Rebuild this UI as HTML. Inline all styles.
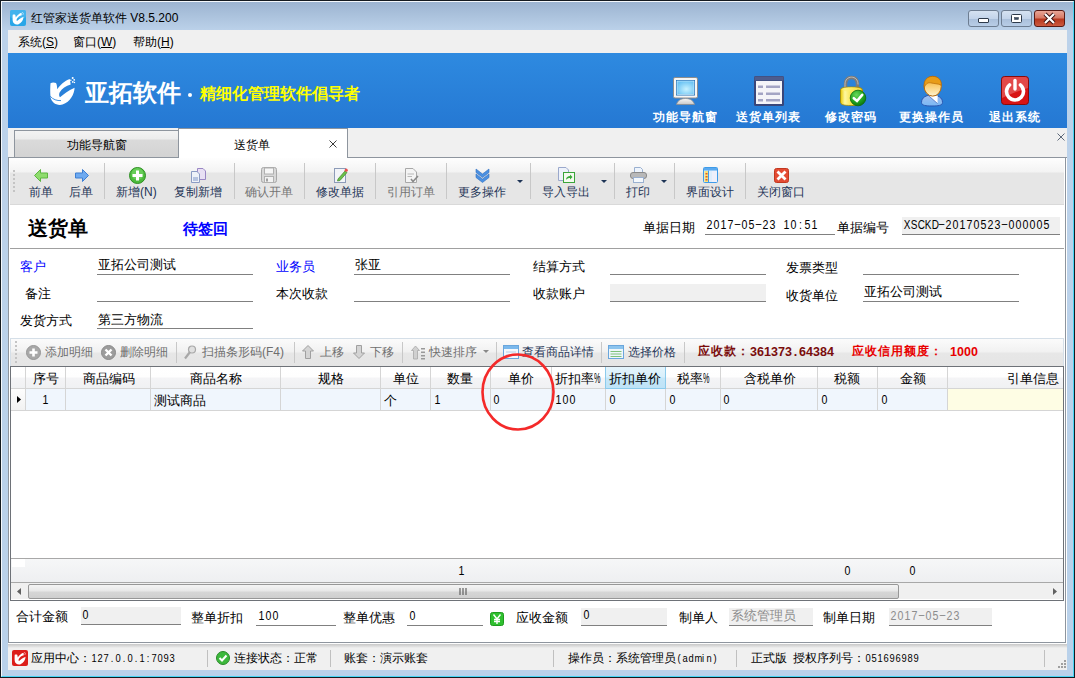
<!DOCTYPE html>
<html><head><meta charset="utf-8">
<style>
*{margin:0;padding:0;box-sizing:border-box}
html,body{width:1075px;height:678px;overflow:hidden;background:#b9d1ea}
body{position:relative;font-family:"Liberation Sans",sans-serif;font-size:12px;color:#000}
.a{position:absolute}
.t{position:absolute;white-space:nowrap;font-size:12px;line-height:12px}
.t13{position:absolute;white-space:nowrap;font-size:13px;line-height:13px}
.m{font-family:"Liberation Mono",monospace}
.d{font-family:"Liberation Sans",sans-serif;font-size:12.5px;line-height:13px}
.d i{display:inline-block;width:7px;text-align:center;font-style:normal;transform:scaleX(.85)}
.bd i{transform:none}
.d b{display:inline-block;width:7px;text-align:center;font-weight:normal;transform:scaleX(0.8)}
.d12{font-family:"Liberation Sans",sans-serif;font-size:11px}
.d12 i{display:inline-block;width:6px;text-align:center;font-style:normal;transform:scaleX(.85)}
svg{position:absolute;overflow:visible}
</style></head><body>
<!-- window frame -->
<div class="a" style="left:0;top:0;width:1075px;height:678px;border:1px solid #141a20;background:linear-gradient(#9bb3d0 0,#bcd2ea 30px,#b9d1ea 100%)"></div>
<div class="a" style="left:1px;top:1px;width:1073px;height:676px;border:1px solid #f4f8fc;border-right-color:#46d4f4;border-bottom-color:#46d4f4"></div>

<!-- title -->
<svg style="left:10px;top:10px" width="16" height="16" viewBox="0 0 16 16"><rect x="0" y="0" width="16" height="16" rx="2" fill="#28a6e8"/><rect x="0" y="0" width="16" height="8" rx="2" fill="#5cc0f2" opacity=".5"/><g transform="translate(2.5,2) scale(0.45)"><path d="M0.5,6.3 C1.8,5.3 4.2,5.2 6,6 C6.9,7.5 7.1,10 7.2,12.3 C10,8 14.5,3.6 19.8,1.9 L20.7,7.4 C16,8.6 11.8,11.5 9.6,15.5 C8.9,17 8.9,19 10,20.2 C13.5,17.5 18,13.5 24.6,10.8 C24.2,17.5 20.5,24.8 12.5,27.6 C6.5,29 1.5,25.5 0.5,20 C0.1,15 0.2,10 0.5,6.3Z" fill="#fff"/><g fill="#fff"><circle cx="22.7" cy="1" r="1"/><circle cx="24.2" cy="2.8" r="0.9"/><circle cx="22.8" cy="4.9" r="0.9"/><circle cx="20.8" cy="3.3" r="0.8"/><circle cx="24.5" cy="5.5" r="0.7"/></g></g></svg>
<div class="t" style="left:31px;top:12px;font-size:12px">红管家送货单软件 V8.5.200</div>
<!-- window buttons -->
<div class="a" style="left:968px;top:10px;width:31px;height:17px;border:1px solid #6d7d91;border-radius:3px;background:linear-gradient(#d5e2f1 0,#c3d4ea 50%,#a9bfda 51%,#b8cde6 100%)"></div>
<div class="a" style="left:978px;top:18px;width:11px;height:5px;border:1px solid #2d3a4a;background:#fff;border-radius:1px"></div>
<div class="a" style="left:1001px;top:10px;width:31px;height:17px;border:1px solid #6d7d91;border-radius:3px;background:linear-gradient(#d5e2f1 0,#c3d4ea 50%,#a9bfda 51%,#b8cde6 100%)"></div>
<svg style="left:1011px;top:14px" width="11" height="9" viewBox="0 0 11 9"><rect x="0.5" y="0.5" width="10" height="8" rx="1" fill="#fff" stroke="#2d3a4a"/><rect x="3.5" y="3.5" width="4" height="2" fill="#3a4a5e" stroke="#2d3a4a" stroke-width=".5"/></svg>
<div class="a" style="left:1034px;top:10px;width:31px;height:17px;border:1px solid #5a1a14;border-radius:3px;background:linear-gradient(#e8a596 0,#d77a66 45%,#b8381f 55%,#cc5a40 100%)"></div>
<svg style="left:1043px;top:13px" width="13" height="11" viewBox="0 0 13 11"><path d="M2 1 L11 10 M11 1 L2 10" stroke="#3a1010" stroke-width="4"/><path d="M2 1 L11 10 M11 1 L2 10" stroke="#fff" stroke-width="2.2"/></svg>

<!-- menu -->
<div class="a" style="left:8px;top:30px;width:1059px;height:23px;background:#f0f0f0"></div>
<div class="t" style="left:18px;top:36px">系统(<u>S</u>)</div>
<div class="t" style="left:73px;top:36px">窗口(<u>W</u>)</div>
<div class="t" style="left:133px;top:36px">帮助(<u>H</u>)</div>

<!-- banner -->
<div class="a" style="left:8px;top:53px;width:1059px;height:75px;background:linear-gradient(#2e8ae0,#2578d3)"></div>
<svg style="left:50px;top:77px" width="26" height="29" viewBox="0 0 26 29"><path d="M0.5,6.3 C1.8,5.3 4.2,5.2 6,6 C6.9,7.5 7.1,10 7.2,12.3 C10,8 14.5,3.6 19.8,1.9 L20.7,7.4 C16,8.6 11.8,11.5 9.6,15.5 C8.9,17 8.9,19 10,20.2 C13.5,17.5 18,13.5 24.6,10.8 C24.2,17.5 20.5,24.8 12.5,27.6 C6.5,29 1.5,25.5 0.5,20 C0.1,15 0.2,10 0.5,6.3Z" fill="#fff"/><g fill="#fff"><circle cx="22.7" cy="1" r="1"/><circle cx="24.2" cy="2.8" r="0.9"/><circle cx="22.8" cy="4.9" r="0.9"/><circle cx="20.8" cy="3.3" r="0.8"/><circle cx="24.5" cy="5.5" r="0.7"/></g><path d="M0.2,19.2 C3,22.6 7,23.8 11,23.6" stroke="#2b85dc" stroke-width="0.9" fill="none"/></svg>
<div class="t" style="left:85px;top:81px;font-size:24px;line-height:24px;color:#fff;font-weight:bold">亚拓软件</div>
<div class="a" style="left:188px;top:93px;width:4px;height:4px;border-radius:50%;background:#fff"></div>
<div class="t" style="left:200px;top:86px;font-size:16px;line-height:16px;color:#ffff00;font-weight:bold">精细化管理软件倡导者</div>

<!-- banner right icons -->
<div class="t13" style="left:653px;top:111px;color:#fff;font-weight:bold;font-size:12px;letter-spacing:1px">功能导航窗</div>
<div class="t13" style="left:736px;top:111px;color:#fff;font-weight:bold;font-size:12px;letter-spacing:1px">送货单列表</div>
<div class="t13" style="left:825px;top:111px;color:#fff;font-weight:bold;font-size:12px;letter-spacing:1px">修改密码</div>
<div class="t13" style="left:899px;top:111px;color:#fff;font-weight:bold;font-size:12px;letter-spacing:1px">更换操作员</div>
<div class="t13" style="left:989px;top:111px;color:#fff;font-weight:bold;font-size:12px;letter-spacing:1px">退出系统</div>

<!-- banner icons -->
<svg style="left:673px;top:77px" width="26" height="28" viewBox="0 0 26 28"><defs><radialGradient id="gscr" cx=".55" cy=".6" r=".6"><stop offset="0" stop-color="#c8f2ff"/><stop offset="1" stop-color="#6cc4f4"/></radialGradient><linearGradient id="gstand" x1="0" y1="0" x2="0" y2="1"><stop offset="0" stop-color="#f8f8f8"/><stop offset="1" stop-color="#c8c8c8"/></linearGradient></defs><rect x="0.5" y="0.5" width="24" height="20.5" rx="1.5" fill="#f6f6f6" stroke="#8e8e8e"/><rect x="3" y="3" width="19" height="15.5" fill="#1a6fb8"/><rect x="4" y="4" width="17" height="13.5" fill="url(#gscr)" stroke="#e0f6ff" stroke-width=".6"/><path d="M3.5,27.5 C4.5,23.5 8,21.5 12.5,21.5 C17,21.5 20.5,23.5 21.5,27.5Z" fill="url(#gstand)" stroke="#8e8e8e" stroke-width=".8"/></svg>
<svg style="left:754px;top:76px" width="30" height="30" viewBox="0 0 30 30"><rect x="0" y="0" width="30" height="30" rx="1.5" fill="#39467a"/><rect x="0.5" y="0.5" width="29" height="4" fill="#4d5c8e"/><rect x="2" y="5" width="26" height="23" fill="#f4f4f8"/><g fill="#a3a4c4"><rect x="4" y="9.5" width="5" height="2.5"/><rect x="12" y="9.5" width="14" height="2.5"/><rect x="4" y="16.5" width="5" height="2.5"/><rect x="12" y="16.5" width="14" height="2.5"/><rect x="4" y="23" width="5" height="2.5"/><rect x="12" y="23" width="14" height="2.5"/></g></svg>
<svg style="left:840px;top:76px" width="27" height="30" viewBox="0 0 27 30"><defs><linearGradient id="glock" x1="0" y1="0" x2="1" y2="0"><stop offset="0" stop-color="#e8c800"/><stop offset=".2" stop-color="#fff8a0"/><stop offset=".55" stop-color="#f8e040"/><stop offset="1" stop-color="#d8b000"/></linearGradient><radialGradient id="gchk" cx=".4" cy=".3" r=".7"><stop offset="0" stop-color="#6ad85a"/><stop offset=".6" stop-color="#22a822"/><stop offset="1" stop-color="#0e7a12"/></radialGradient></defs><path d="M5.5,13 V8.5 C5.5,3.5 8,1.5 11.5,1.5 C15,1.5 17.5,3.5 17.5,8.5 V13" fill="none" stroke="#7c7c7c" stroke-width="3.4"/><path d="M5,12 V8.5 C5,3.5 8,1.2 11.5,1.2 C15,1.2 18,3.5 18,8.5" fill="none" stroke="#b8b8b8" stroke-width="1"/><path d="M0.5,14 C0.5,12 3,11 11.5,11 C20,11 22.5,12 22.5,14 V26 C22.5,28.5 20,29.5 11.5,29.5 C3,29.5 0.5,28.5 0.5,26Z" fill="url(#glock)" stroke="#a88a00" stroke-width=".8"/><ellipse cx="11.5" cy="13.5" rx="10" ry="2.2" fill="#fff070" opacity=".6"/><circle cx="18" cy="22" r="7.8" fill="url(#gchk)" stroke="#0a6a0e" stroke-width=".8"/><path d="M13.8,22.2 L17,25 L22.2,18.8" stroke="#fff" stroke-width="2.6" fill="none" stroke-linecap="round"/></svg>
<svg style="left:921px;top:76px" width="23" height="31" viewBox="0 0 23 31"><defs><linearGradient id="gface" x1="0" y1="0" x2="0" y2="1"><stop offset="0" stop-color="#f6a818"/><stop offset="1" stop-color="#fff4d0"/></linearGradient><linearGradient id="gshirt" x1="0" y1="0" x2="0" y2="1"><stop offset="0" stop-color="#a4bff0"/><stop offset="1" stop-color="#78b8f4"/></linearGradient></defs><path d="M0.5,26.5 C0.5,21.5 5,19 11,19 C17,19 21.5,21.5 21.5,26.5 C21.5,29.5 17,30 11,30 C5,30 0.5,29.5 0.5,26.5Z" fill="url(#gshirt)" stroke="#2a56b0"/><path d="M7.5,19.6 L16.7,19.6 L16.5,27.5Z" fill="#fff"/><path d="M7.5,19.6 L16.5,27.5" stroke="#3a62b8" stroke-width=".7"/><ellipse cx="11.7" cy="10.2" rx="8.6" ry="9.9" fill="url(#gface)" stroke="#b86a08"/><path d="M3.2,11.5 C2.4,4 6,0.4 11.7,0.4 C17.5,0.4 20.7,4 20.3,9.2 C17,7.5 13,7.8 9.5,6.8 C6.5,6.3 4.5,8.5 3.2,11.5Z" fill="#e89c18" stroke="#b86a08" stroke-width=".7"/></svg>
<svg style="left:1001px;top:76px" width="28" height="29" viewBox="0 0 28 29"><rect x="0.5" y="0.5" width="27" height="28" rx="3" fill="#d81414" stroke="#8a0a0a"/><path d="M1 4 Q1 1 4 1 H24 Q27 1 27 4 V12 Q14 16 1 22Z" fill="#f08a8a" opacity=".45"/><path d="M8.5 9 A8.5 8.5 0 1 0 19.5 9" fill="none" stroke="#fff" stroke-width="3.6" stroke-linecap="round"/><path d="M14 4.5 V13" stroke="#fff" stroke-width="3.4" stroke-linecap="round"/></svg>

<!-- tab strip -->
<div class="a" style="left:8px;top:128px;width:1059px;height:29px;background:#f0f0f0"></div>
<div class="a" style="left:347px;top:157px;width:720px;height:1px;background:#8e959e"></div><div class="a" style="left:8px;top:157px;width:7px;height:1px;background:#8e959e"></div>
<div class="a" style="left:14px;top:130px;width:165px;height:28px;border:1px solid #8e959e;background:linear-gradient(#f3f3f3 0,#ececec 8px,#dadada 9px,#d3d3d3 100%)"></div>
<div class="t" style="left:67px;top:139px">功能导航窗</div>
<div class="a" style="left:178px;top:128px;width:170px;height:30px;border:1px solid #8e959e;border-bottom:none;background:#fff"></div>
<div class="t" style="left:234px;top:139px">送货单</div>
<svg style="left:329px;top:140px" width="8" height="8" viewBox="0 0 8 8"><path d="M0.5 0.5 L7.5 7.5 M7.5 0.5 L0.5 7.5" stroke="#3c3c3c" stroke-width="1"/></svg>
<svg style="left:1057px;top:133px" width="8" height="8" viewBox="0 0 8 8"><path d="M0.5 0.5 L7.5 7.5 M7.5 0.5 L0.5 7.5" stroke="#5c6878" stroke-width="1"/></svg>

<!-- panel -->
<div class="a" style="left:8px;top:158px;width:1059px;height:485px;background:#fff"></div><div class="a" style="left:8px;top:158px;width:1058px;height:485px;border:1px solid #8e959e;border-top:none;background:#fff"></div>

<!-- toolbar -->
<div class="a" style="left:10px;top:158px;width:1054px;height:47px;background:linear-gradient(#fefefe 0,#f3f3f3 14px,#e6e6e6 15px,#e6e6e6 45px);border-bottom:1px solid #d9d9d9"></div>
<svg style="left:13px;top:170px" width="2" height="24" viewBox="0 0 2 24"><g fill="#c4c4c4"><rect y="0" width="2" height="2"/><rect y="4" width="2" height="2"/><rect y="8" width="2" height="2"/><rect y="12" width="2" height="2"/><rect y="16" width="2" height="2"/><rect y="20" width="2" height="2"/></g></svg>
<div class="a" style="left:104px;top:163px;width:1px;height:36px;background:#c8c8c8"></div>
<div class="a" style="left:234px;top:163px;width:1px;height:36px;background:#c8c8c8"></div>
<div class="a" style="left:304px;top:163px;width:1px;height:36px;background:#c8c8c8"></div>
<div class="a" style="left:375px;top:163px;width:1px;height:36px;background:#c8c8c8"></div>
<div class="a" style="left:446px;top:163px;width:1px;height:36px;background:#c8c8c8"></div>
<div class="a" style="left:530px;top:163px;width:1px;height:36px;background:#c8c8c8"></div>
<div class="a" style="left:614px;top:163px;width:1px;height:36px;background:#c8c8c8"></div>
<div class="a" style="left:674px;top:163px;width:1px;height:36px;background:#c8c8c8"></div>
<div class="a" style="left:745px;top:163px;width:1px;height:36px;background:#c8c8c8"></div>
<!-- icons -->
<svg style="left:34px;top:169px" width="14" height="13" viewBox="0 0 14 13"><path d="M0.5 6.5 L6.5 0.5 L6.5 4 L13.5 4 L13.5 9 L6.5 9 L6.5 12.5Z" fill="#8fdc6e" stroke="#5cb640" stroke-width="1"/></svg>
<svg style="left:75px;top:169px" width="14" height="13" viewBox="0 0 14 13"><path d="M13.5 6.5 L7.5 0.5 L7.5 4 L0.5 4 L0.5 9 L7.5 9 L7.5 12.5Z" fill="#6eaaf0" stroke="#3d7fd3" stroke-width="1"/></svg>
<svg style="left:129px;top:167px" width="17" height="17" viewBox="0 0 17 17"><circle cx="8.5" cy="8.5" r="8" fill="#4cbb3c" stroke="#2f8f25"/><circle cx="8.5" cy="7" r="6" fill="#7ad96a" opacity=".6"/><path d="M8.5 3.5 V13.5 M3.5 8.5 H13.5" stroke="#fff" stroke-width="3"/></svg>
<svg style="left:191px;top:168px" width="15" height="15" viewBox="0 0 15 15"><path d="M6.5 0.5 H12 L14.5 3 V11.5 H6.5Z" fill="#e8e0f4" stroke="#9a87c4"/><path d="M0.5 3.5 H6 L8.5 6 V14.5 H0.5Z" fill="#eef2f8" stroke="#8b9cc4"/><rect x="2" y="9" width="5" height="4" fill="#b6c4e0"/></svg>
<svg style="left:261px;top:167px" width="16" height="16" viewBox="0 0 16 16"><rect x="0.5" y="0.5" width="15" height="15" rx="2" fill="#d8d8d8" stroke="#a8a8a8"/><rect x="3.5" y="1" width="9" height="6" fill="#f6f6f6" stroke="#b0b0b0"/><rect x="3.5" y="9.5" width="9" height="6" fill="#f2f2f2" stroke="#b0b0b0"/><rect x="5" y="11.5" width="2" height="3" fill="#a0a0a0"/></svg>
<svg style="left:334px;top:167px" width="14" height="16" viewBox="0 0 14 16"><rect x="0.5" y="1.5" width="11" height="14" fill="#f2f4f8" stroke="#8d9bb8"/><path d="M4 12 L11 4 L13 5.5 L6 13.5 L3.5 14Z" fill="#6cc04a" stroke="#3f8a2a" stroke-width=".7"/><circle cx="12.2" cy="3.2" r="1.6" fill="#e85050"/></svg>
<svg style="left:405px;top:168px" width="14" height="15" viewBox="0 0 14 15"><path d="M0.5 0.5 H8 L11.5 4 V14.5 H0.5Z" fill="#f4f4f4" stroke="#a8a8a8"/><path d="M2.5 6 H9 M2.5 8.5 H7" stroke="#b8b8b8"/><path d="M6 11 L8 13.5 L13 8" stroke="#8a8a8a" stroke-width="1.6" fill="none"/></svg>
<svg style="left:475px;top:168px" width="15" height="15" viewBox="0 0 15 15"><path d="M1 1 L7.5 6 L14 1 L14 4.5 L7.5 9.5 L1 4.5Z" fill="#4a90e2" stroke="#2f6fc0" stroke-width=".6"/><path d="M1 6 L7.5 11 L14 6 L14 9.5 L7.5 14.5 L1 9.5Z" fill="#4a90e2" stroke="#2f6fc0" stroke-width=".6"/></svg>
<svg style="left:558px;top:167px" width="17" height="16" viewBox="0 0 17 16"><path d="M0.5 0.5 H8 L10.5 3 V13.5 H0.5Z" fill="#eef2fa" stroke="#9aa8cc"/><rect x="5.5" y="5.5" width="11" height="10" fill="#f4fbf0" stroke="#3aa53a"/><path d="M8 13 C8 10 10 9 12 9 L12 7.5 L14.5 10 L12 12.5 L12 11 C10.5 11 9 11.5 8 13Z" fill="#38a838"/></svg>
<svg style="left:630px;top:167px" width="17" height="16" viewBox="0 0 17 16"><path d="M4.5 0.5 H10.5 L12.5 2.5 V6.5 H4.5Z" fill="#eef4fc" stroke="#9ab0d0"/><rect x="0.5" y="5.5" width="16" height="6" rx="2.5" fill="#b8b8b8" stroke="#8a8a8a"/><rect x="3.5" y="10.5" width="10" height="5" fill="#f4f8fc" stroke="#9ab0d0"/></svg>
<svg style="left:703px;top:167px" width="15" height="16" viewBox="0 0 15 16"><rect x="0.5" y="0.5" width="14" height="15" rx="1" fill="#dfeefc" stroke="#3e9be8"/><rect x="1" y="1" width="13" height="2.5" fill="#5aaaf0"/><rect x="1.5" y="4" width="4" height="11" fill="#f6e27a"/><path d="M5.5 3.5 V15" stroke="#3e9be8"/><rect x="9" y="4" width="5" height="11" fill="#eef0fb"/><g fill="#e05a2a"><rect x="2.5" y="6" width="2" height="1.5"/><rect x="2.5" y="9" width="2" height="1.5"/><rect x="2.5" y="12" width="2" height="1.5"/></g></svg>
<svg style="left:774px;top:168px" width="15" height="15" viewBox="0 0 15 15"><rect x="0.5" y="0.5" width="14" height="14" rx="2" fill="#e44b33" stroke="#c2381f"/><path d="M3.5 3.5 L11.5 11.5 M11.5 3.5 L3.5 11.5" stroke="#fff" stroke-width="2.8"/></svg>
<!-- dropdown arrows -->
<svg style="left:517px;top:180px" width="6" height="3" viewBox="0 0 6 3"><path d="M0 0 H6 L3 3Z" fill="#1e3456"/></svg>
<svg style="left:601px;top:180px" width="6" height="3" viewBox="0 0 6 3"><path d="M0 0 H6 L3 3Z" fill="#1e3456"/></svg>
<svg style="left:661px;top:180px" width="6" height="3" viewBox="0 0 6 3"><path d="M0 0 H6 L3 3Z" fill="#1e3456"/></svg>
<!-- toolbar labels -->
<div class="t" style="left:29px;top:186px;color:#1e3456">前单</div>
<div class="t" style="left:69px;top:186px;color:#1e3456">后单</div>
<div class="t" style="left:116px;top:186px;color:#1e3456">新增(N)</div>
<div class="t" style="left:174px;top:186px;color:#1e3456">复制新增</div>
<div class="t" style="left:245px;top:186px;color:#747474">确认开单</div>
<div class="t" style="left:316px;top:186px;color:#1e3456">修改单据</div>
<div class="t" style="left:387px;top:186px;color:#747474">引用订单</div>
<div class="t" style="left:458px;top:186px;color:#1e3456">更多操作</div>
<div class="t" style="left:542px;top:186px;color:#1e3456">导入导出</div>
<div class="t" style="left:626px;top:186px;color:#1e3456">打印</div>
<div class="t" style="left:686px;top:186px;color:#1e3456">界面设计</div>
<div class="t" style="left:757px;top:186px;color:#1e3456">关闭窗口</div>

<!-- header -->
<div class="t" style="left:28px;top:218px;font-size:20px;line-height:20px;font-weight:bold;font-family:'Liberation Serif',serif">送货单</div>
<div class="t" style="left:183px;top:221px;font-size:15px;line-height:15px;font-weight:bold;color:#0000ff">待签回</div>
<div class="t13" style="left:643px;top:221px">单据日期</div>
<div class="t d" style="left:706px;top:219px"><i>2</i><i>0</i><i>1</i><i>7</i><i style="transform:translateY(-1px) scaleX(.8)">&#8211;</i><i>0</i><i>5</i><i style="transform:translateY(-1px) scaleX(.8)">&#8211;</i><i>2</i><i>3</i><i>&nbsp;</i><i>1</i><i>0</i><i>:</i><i>5</i><i>1</i></div>
<div class="a" style="left:705px;top:234px;width:130px;height:1px;background:#808080"></div>
<div class="t13" style="left:837px;top:221px">单据编号</div>
<div class="a" style="left:902px;top:217px;width:158px;height:18px;background:#f0f0f0;border-bottom:1px solid #808080"></div>
<div class="t d" style="left:903px;top:219px"><b>X</b><b>S</b><b>C</b><b>K</b><b>D</b><i style="transform:translateY(-1px) scaleX(.8)">&#8211;</i><i>2</i><i>0</i><i>1</i><i>7</i><i>0</i><i>5</i><i>2</i><i>3</i><i style="transform:translateY(-1px) scaleX(.8)">&#8211;</i><i>0</i><i>0</i><i>0</i><i>0</i><i>0</i><i>5</i></div>
<div class="a" style="left:10px;top:248px;width:1054px;height:1px;background:#a0a0a0"></div>

<!-- form -->
<div class="t13" style="left:20px;top:260px;color:#0000ff">客户</div>
<div class="t13" style="left:98px;top:258px">亚拓公司测试</div>
<div class="a" style="left:97px;top:274px;width:156px;height:1px;background:#808080"></div>
<div class="t13" style="left:276px;top:260px;color:#0000ff">业务员</div>
<div class="t13" style="left:355px;top:258px">张亚</div>
<div class="a" style="left:354px;top:274px;width:156px;height:1px;background:#808080"></div>
<div class="t13" style="left:533px;top:260px">结算方式</div>
<div class="a" style="left:610px;top:274px;width:156px;height:1px;background:#808080"></div>
<div class="t13" style="left:786px;top:261px">发票类型</div>
<div class="a" style="left:863px;top:274px;width:156px;height:1px;background:#808080"></div>

<div class="t13" style="left:25px;top:287px">备注</div>
<div class="a" style="left:97px;top:301px;width:156px;height:1px;background:#808080"></div>
<div class="t13" style="left:276px;top:287px">本次收款</div>
<div class="a" style="left:354px;top:301px;width:156px;height:1px;background:#808080"></div>
<div class="t13" style="left:533px;top:287px">收款账户</div>
<div class="a" style="left:610px;top:284px;width:156px;height:18px;background:#f0f0f0;border-bottom:1px solid #808080"></div>
<div class="t13" style="left:786px;top:289px">收货单位</div>
<div class="t13" style="left:864px;top:285px">亚拓公司测试</div>
<div class="a" style="left:863px;top:301px;width:156px;height:1px;background:#808080"></div>

<div class="t13" style="left:20px;top:314px">发货方式</div>
<div class="t13" style="left:98px;top:313px">第三方物流</div>
<div class="a" style="left:97px;top:328px;width:156px;height:1px;background:#808080"></div>

<!-- detail toolbar -->
<div class="a" style="left:10px;top:338px;width:1054px;height:28px;border:1px solid #d5dfe8;border-bottom:none;background:linear-gradient(#fbfbfb 0,#f1f1f1 13px,#e7e7e7 14px,#e5e5e5 100%)"></div>
<svg style="left:15px;top:341px" width="2" height="22" viewBox="0 0 2 22"><g fill="#c4c4c4"><rect y="0" width="2" height="2"/><rect y="4" width="2" height="2"/><rect y="8" width="2" height="2"/><rect y="12" width="2" height="2"/><rect y="16" width="2" height="2"/><rect y="20" width="2" height="2"/></g></svg>
<div class="a" style="left:176px;top:342px;width:1px;height:21px;background:#c8c8c8"></div>
<div class="a" style="left:294px;top:342px;width:1px;height:21px;background:#c8c8c8"></div>
<div class="a" style="left:402px;top:342px;width:1px;height:21px;background:#c8c8c8"></div>
<div class="a" style="left:496px;top:342px;width:1px;height:21px;background:#c8c8c8"></div>
<div class="a" style="left:601px;top:342px;width:1px;height:21px;background:#c8c8c8"></div>
<div class="a" style="left:684px;top:342px;width:1px;height:21px;background:#c8c8c8"></div>
<svg style="left:26px;top:345px" width="15" height="15" viewBox="0 0 15 15"><circle cx="7.5" cy="7.5" r="7" fill="#a8a8a8" stroke="#969696"/><path d="M7.5 3.5 V11.5 M3.5 7.5 H11.5" stroke="#fff" stroke-width="2.6"/></svg>
<svg style="left:101px;top:345px" width="15" height="15" viewBox="0 0 15 15"><circle cx="7.5" cy="7.5" r="7" fill="#9c9c9c" stroke="#8a8a8a"/><path d="M4.5 4.5 L10.5 10.5 M10.5 4.5 L4.5 10.5" stroke="#fff" stroke-width="2.4"/></svg>
<svg style="left:184px;top:345px" width="12" height="15" viewBox="0 0 12 15"><circle cx="8" cy="4.5" r="3.5" fill="#e0e0e0" stroke="#a8a8a8" stroke-width="1.2"/><path d="M6 7 L1 13.5" stroke="#a8a8a8" stroke-width="2.2"/></svg>
<svg style="left:302px;top:345px" width="12" height="14" viewBox="0 0 12 14"><path d="M6 0.5 L11.5 6 H8.5 V13.5 H3.5 V6 H0.5Z" fill="#d4d4d4" stroke="#a0a0a0"/></svg>
<svg style="left:353px;top:345px" width="12" height="14" viewBox="0 0 12 14"><path d="M6 13.5 L11.5 8 H8.5 V0.5 H3.5 V8 H0.5Z" fill="#d4d4d4" stroke="#a0a0a0"/></svg>
<svg style="left:411px;top:345px" width="15" height="15" viewBox="0 0 15 15"><path d="M4.5 1 L8.5 5.5 H6.5 V14 H2.5 V5.5 H0.5Z" fill="#d0d0d0" stroke="#a8a8a8" stroke-width=".8"/><g fill="#999"><rect x="10" y="3" width="4" height="1.5"/><rect x="10" y="6.5" width="4" height="1.5"/><rect x="10" y="10" width="4" height="1.5"/><rect x="10" y="13" width="4" height="1.5"/></g></svg>
<svg style="left:483px;top:350px" width="6" height="3" viewBox="0 0 6 3"><path d="M0 0 H6 L3 3Z" fill="#888"/></svg>
<svg style="left:503px;top:345px" width="16" height="14" viewBox="0 0 16 14"><rect x="0.5" y="0.5" width="15" height="13" fill="#f4f8fc" stroke="#6aa6dc"/><rect x="1" y="1" width="14" height="3" fill="#7ab8ec"/><path d="M3 7 H13 M3 10 H13" stroke="#b8d0e8"/></svg>
<svg style="left:608px;top:345px" width="16" height="14" viewBox="0 0 16 14"><rect x="0.5" y="0.5" width="15" height="13" fill="#eef6fb" stroke="#6aa6dc"/><rect x="1" y="1" width="14" height="3" fill="#8cc4ee"/><path d="M2.5 6.5 H13.5 M2.5 9 H13.5 M2.5 11.5 H13.5" stroke="#7ec27a"/></svg>
<div class="t" style="left:45px;top:346px;color:#6e6e6e">添加明细</div>
<div class="t" style="left:120px;top:346px;color:#6e6e6e">删除明细</div>
<div class="t" style="left:202px;top:346px;color:#6e6e6e">扫描条形码(F4)</div>
<div class="t" style="left:320px;top:346px;color:#6e6e6e">上移</div>
<div class="t" style="left:370px;top:346px;color:#6e6e6e">下移</div>
<div class="t" style="left:429px;top:346px;color:#6e6e6e">快速排序</div>
<div class="t" style="left:522px;top:346px;color:#1e3456">查看商品详情</div>
<div class="t" style="left:628px;top:346px;color:#1e3456">选择价格</div>
<div class="t" style="left:698px;top:345px;color:#7a0c0c;font-weight:bold;letter-spacing:1px">应收款：</div><div class="t d bd" style="left:750px;top:346px;color:#7a0c0c;font-weight:bold"><i>3</i><i>6</i><i>1</i><i>3</i><i>7</i><i>3</i><i>.</i><i>6</i><i>4</i><i>3</i><i>8</i><i>4</i></div>
<div class="t" style="left:852px;top:345px;color:#e80000;font-weight:bold;letter-spacing:1px">应收信用额度：</div><div class="t d bd" style="left:950px;top:346px;color:#e80000;font-weight:bold"><i>1</i><i>0</i><i>0</i><i>0</i></div>

<!-- grid -->
<div class="a" style="left:10px;top:366px;width:1054px;height:235px;border:1px solid #6e7278;background:#fff"></div>
<div class="a" style="left:11px;top:367px;width:1052px;height:22px;background:linear-gradient(#ffffff 0,#fefefe 10px,#f4f4f6 11px,#f0f1f3 100%);border-bottom:1px solid #d5d5d5"></div>
<div class="a" style="left:605px;top:367px;width:61px;height:22px;background:linear-gradient(#e4f4fc 0,#d8effb 10px,#c4e6f8 11px,#bfe3f7 100%);border:1px solid #8ccbec;border-top:none"></div>
<div class="a" style="left:26px;top:389px;width:922px;height:22px;background:#f0f6fd;border-bottom:1px solid #d5d5d5"></div>
<div class="a" style="left:948px;top:389px;width:115px;height:22px;background:#fefde4;border-bottom:1px solid #d5d5d5"></div>
<div class="a" style="left:11px;top:389px;width:15px;height:21px;background:linear-gradient(#fdfdfd,#f2f2f2)"></div><div class="a" style="left:11px;top:410px;width:1052px;height:1px;background:#d5d5d5"></div>
<!-- column lines -->
<div class="a" style="left:25px;top:367px;width:1px;height:43px;background:#d5d5d5"></div>
<div class="a" style="left:65px;top:367px;width:1px;height:43px;background:#d5d5d5"></div>
<div class="a" style="left:150px;top:367px;width:1px;height:43px;background:#d5d5d5"></div>
<div class="a" style="left:280px;top:367px;width:1px;height:43px;background:#d5d5d5"></div>
<div class="a" style="left:380px;top:367px;width:1px;height:43px;background:#d5d5d5"></div>
<div class="a" style="left:430px;top:367px;width:1px;height:43px;background:#d5d5d5"></div>
<div class="a" style="left:490px;top:367px;width:1px;height:43px;background:#d5d5d5"></div>
<div class="a" style="left:551px;top:367px;width:1px;height:43px;background:#d5d5d5"></div>
<div class="a" style="left:605px;top:389px;width:1px;height:21px;background:#d5d5d5"></div>
<div class="a" style="left:665px;top:389px;width:1px;height:21px;background:#d5d5d5"></div>
<div class="a" style="left:720px;top:367px;width:1px;height:43px;background:#d5d5d5"></div>
<div class="a" style="left:817px;top:367px;width:1px;height:43px;background:#d5d5d5"></div>
<div class="a" style="left:877px;top:367px;width:1px;height:43px;background:#d5d5d5"></div>
<div class="a" style="left:947px;top:367px;width:1px;height:43px;background:#d5d5d5"></div>
<!-- header text -->
<div class="t13" style="left:33px;top:372px">序号</div>
<div class="t13" style="left:83px;top:372px">商品编码</div>
<div class="t13" style="left:190px;top:372px">商品名称</div>
<div class="t13" style="left:318px;top:372px">规格</div>
<div class="t13" style="left:393px;top:372px">单位</div>
<div class="t13" style="left:447px;top:372px">数量</div>
<div class="t13" style="left:508px;top:372px">单价</div>
<div class="t13" style="left:555px;top:372px">折扣率<span style="display:inline-block;width:6px;font-size:14px;line-height:13px;transform:scaleX(.52);transform-origin:0 0;vertical-align:top">%</span></div>
<div class="t13" style="left:609px;top:372px">折扣单价</div>
<div class="t13" style="left:677px;top:372px">税率<span style="display:inline-block;width:6px;font-size:14px;line-height:13px;transform:scaleX(.52);transform-origin:0 0;vertical-align:top">%</span></div>
<div class="t13" style="left:744px;top:372px">含税单价</div>
<div class="t13" style="left:834px;top:372px">税额</div>
<div class="t13" style="left:900px;top:372px">金额</div>
<div class="t13" style="left:1007px;top:372px">引单信息</div>
<!-- row -->
<svg style="left:17px;top:396px" width="4" height="7" viewBox="0 0 4 7"><path d="M0 0 L4 3.5 L0 7Z" fill="#000"/></svg>
<div class="t d" style="left:42px;top:394px"><i>1</i></div>
<div class="t13" style="left:154px;top:394px">测试商品</div>
<div class="t13" style="left:384px;top:394px">个</div>
<div class="t d" style="left:434px;top:394px"><i>1</i></div>
<div class="t d" style="left:493px;top:394px"><i>0</i></div>
<div class="t d" style="left:555px;top:394px"><i>1</i><i>0</i><i>0</i></div>
<div class="t d" style="left:609px;top:394px"><i>0</i></div>
<div class="t d" style="left:669px;top:394px"><i>0</i></div>
<div class="t d" style="left:723px;top:394px"><i>0</i></div>
<div class="t d" style="left:821px;top:394px"><i>0</i></div>
<div class="t d" style="left:881px;top:394px"><i>0</i></div>
<!-- red circle -->
<svg style="left:481px;top:353px" width="74" height="78" viewBox="0 0 74 78"><ellipse cx="37" cy="39" rx="35.5" ry="37.5" fill="none" stroke="#f42a2a" stroke-width="2.6"/></svg>
<!-- footer row -->
<div class="a" style="left:11px;top:558px;width:1052px;height:25px;border-top:1px solid #a8a8a8;background:linear-gradient(#f6f7f8,#eeeff1);border-bottom:1px solid #a8a8a8"></div>
<div class="a" style="left:12px;top:559px;width:13px;height:8px;background:#fff"></div>
<div class="t d" style="left:458px;top:565px"><i>1</i></div>
<div class="t d" style="left:844px;top:565px"><i>0</i></div>
<div class="t d" style="left:909px;top:565px"><i>0</i></div>
<!-- scrollbar -->
<div class="a" style="left:11px;top:583px;width:1052px;height:16px;background:#f0f0f0"></div>
<svg style="left:17px;top:588px" width="4" height="7" viewBox="0 0 4 7"><path d="M4 0 L0 3.5 L4 7Z" fill="#606060"/></svg>
<svg style="left:1053px;top:588px" width="4" height="7" viewBox="0 0 4 7"><path d="M0 0 L4 3.5 L0 7Z" fill="#606060"/></svg>
<div class="a" style="left:28px;top:584px;width:871px;height:15px;border:1px solid #979797;border-radius:2px;background:linear-gradient(#f4f4f4 0,#e8e8e8 45%,#d6d6d6 55%,#cfcfcf 100%)"></div>
<svg style="left:459px;top:588px" width="9" height="7" viewBox="0 0 9 7"><path d="M1 0 V7 M4 0 V7 M7 0 V7" stroke="#606060" stroke-width="1.2"/></svg>

<!-- totals -->
<div class="t13" style="left:16px;top:610px">合计金额</div>
<div class="a" style="left:81px;top:607px;width:100px;height:18px;background:#f0f0f0;border-bottom:1px solid #808080"></div>
<div class="t d" style="left:82px;top:609px"><i>0</i></div>
<div class="t13" style="left:191px;top:611px">整单折扣</div>
<div class="a" style="left:256px;top:625px;width:80px;height:1px;background:#808080"></div>
<div class="t d" style="left:258px;top:610px"><i>1</i><i>0</i><i>0</i></div>
<div class="t13" style="left:343px;top:611px">整单优惠</div>
<div class="a" style="left:407px;top:625px;width:76px;height:1px;background:#808080"></div>
<div class="t d" style="left:409px;top:610px"><i>0</i></div>
<svg style="left:490px;top:612px" width="14" height="14" viewBox="0 0 14 14"><rect x="0.5" y="0.5" width="13" height="13" rx="2" fill="#2fc02f" stroke="#1f9a1f"/><path d="M3.5 2.5 L7 7 L10.5 2.5 M7 7 V12 M4 7.5 H10 M4 9.5 H10" stroke="#fff" stroke-width="1.4" fill="none"/></svg>
<div class="t13" style="left:516px;top:611px">应收金额</div>
<div class="a" style="left:581px;top:608px;width:86px;height:18px;background:#f0f0f0;border-bottom:1px solid #808080"></div>
<div class="t d" style="left:583px;top:609px"><i>0</i></div>
<div class="t13" style="left:679px;top:611px">制单人</div>
<div class="a" style="left:729px;top:608px;width:84px;height:18px;background:#f0f0f0;border-bottom:1px solid #808080"></div>
<div class="t13" style="left:731px;top:609px;color:#8c8c8c">系统管理员</div>
<div class="t13" style="left:823px;top:611px">制单日期</div>
<div class="a" style="left:889px;top:608px;width:103px;height:18px;background:#f0f0f0;border-bottom:1px solid #808080"></div>
<div class="t d" style="left:890px;top:610px;color:#8c8c8c"><i>2</i><i>0</i><i>1</i><i>7</i><i style="transform:translateY(-1px) scaleX(.8)">&#8211;</i><i>0</i><i>5</i><i style="transform:translateY(-1px) scaleX(.8)">&#8211;</i><i>2</i><i>3</i></div>


<!-- status bar -->
<div class="a" style="left:8px;top:643px;width:1059px;height:27px;background:linear-gradient(#fdfdfd 0,#fdfdfd 1px,#c8c8c8 1px,#e4e4e4 4px,#f0f0f0 5px,#f0f0f0 100%)"></div>
<!-- status contents -->
<svg style="left:12px;top:650px" width="16" height="16" viewBox="0 0 16 16"><rect x="0" y="0" width="16" height="16" rx="2" fill="#dc1e1a"/><g transform="translate(2.5,2) scale(0.45)"><path d="M0.5,6.3 C1.8,5.3 4.2,5.2 6,6 C6.9,7.5 7.1,10 7.2,12.3 C10,8 14.5,3.6 19.8,1.9 L20.7,7.4 C16,8.6 11.8,11.5 9.6,15.5 C8.9,17 8.9,19 10,20.2 C13.5,17.5 18,13.5 24.6,10.8 C24.2,17.5 20.5,24.8 12.5,27.6 C6.5,29 1.5,25.5 0.5,20 C0.1,15 0.2,10 0.5,6.3Z" fill="#fff"/><g fill="#fff"><circle cx="22.7" cy="1" r="1"/><circle cx="24.2" cy="2.8" r="0.9"/><circle cx="22.8" cy="4.9" r="0.9"/><circle cx="20.8" cy="3.3" r="0.8"/><circle cx="24.5" cy="5.5" r="0.7"/></g></g></svg>
<div class="t" style="left:31px;top:652px">应用中心：<span class="d12"><i>1</i><i>2</i><i>7</i><i>.</i><i>0</i><i>.</i><i>0</i><i>.</i><i>1</i><i>:</i><i>7</i><i>0</i><i>9</i><i>3</i></span></div>
<div class="a" style="left:207px;top:650px;width:1px;height:17px;background:#c0c0c0"></div>
<svg style="left:216px;top:651px" width="14" height="14" viewBox="0 0 14 14"><circle cx="7" cy="7" r="6.5" fill="#3cb83c" stroke="#2a8a2a"/><path d="M3.5 7 L6 9.5 L10.5 4.5" stroke="#fff" stroke-width="2" fill="none"/></svg>
<div class="t" style="left:234px;top:652px">连接状态：正常</div>
<div class="a" style="left:330px;top:650px;width:1px;height:17px;background:#c0c0c0"></div>
<div class="t" style="left:344px;top:652px">账套：演示账套</div>
<div class="a" style="left:553px;top:650px;width:1px;height:17px;background:#c0c0c0"></div>
<div class="t" style="left:568px;top:652px">操作员：系统管理员<span class="d12"><i>(</i><i>a</i><i>d</i><i>m</i><i>i</i><i>n</i><i>)</i></span></div>
<div class="a" style="left:736px;top:650px;width:1px;height:17px;background:#c0c0c0"></div>
<div class="t" style="left:751px;top:652px">正式版<span style="display:inline-block;width:6px"></span>授权序列号：<span class="d12"><i>0</i><i>5</i><i>1</i><i>6</i><i>9</i><i>6</i><i>9</i><i>8</i><i>9</i></span></div>
<div class="a" style="left:1044px;top:650px;width:1px;height:17px;background:#c0c0c0"></div>
<svg style="left:1058px;top:660px" width="8" height="8" viewBox="0 0 8 8"><g fill="#a0a0a0"><rect x="6" y="0" width="2" height="2"/><rect x="3" y="3" width="2" height="2"/><rect x="6" y="3" width="2" height="2"/><rect x="0" y="6" width="2" height="2"/><rect x="3" y="6" width="2" height="2"/><rect x="6" y="6" width="2" height="2"/></g></svg>
</body></html>
